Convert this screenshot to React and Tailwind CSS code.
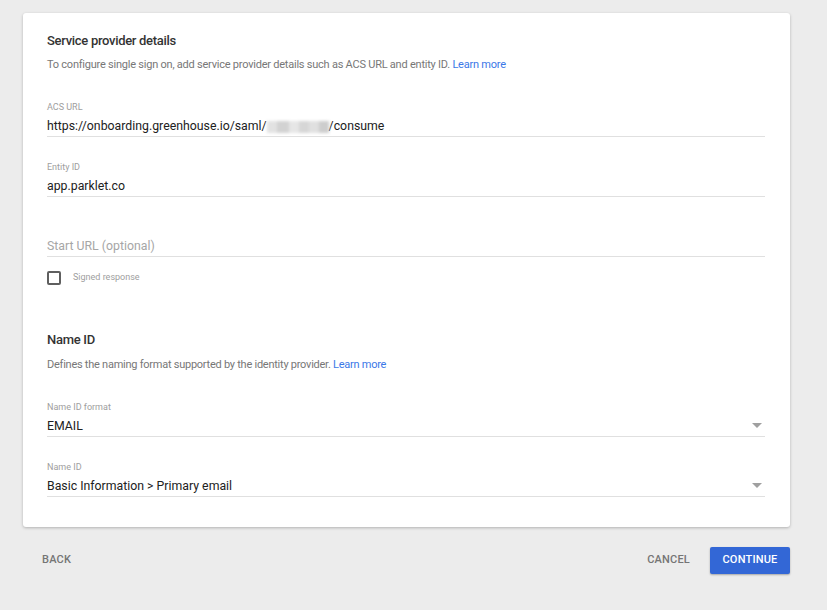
import React from 'react';

const Field = ({ label, value, placeholder, select }) => (
  <div className="flex flex-col">
    <div className="h-[14px] text-[9px] leading-[14px] text-[#9e9e9e]">{label}</div>
    <div className="flex items-center h-[23px] border-b border-[#e0e0e0] pt-[3px]">
      <div className={`flex-1 text-[12.3px] ${placeholder ? 'text-[#a6a6a6]' : 'text-[#212121]'}`}>
        {value || placeholder}
      </div>
      {select && (
        <svg width="10" height="5" viewBox="0 0 10 5" className="mr-[3px] mb-[2px]">
          <path d="M0 0 L10 0 L5 5 Z" fill="#a0a0a0" />
        </svg>
      )}
    </div>
  </div>
);

export default function App() {
  return (
    <div className="min-h-[610px] bg-[#ececec] pt-[13px] pl-[23px] pr-[37px]" style={{ fontFamily: 'Roboto, "Liberation Sans", sans-serif' }}>
      <div className="bg-white rounded-[3px] shadow-[0_1px_3px_rgba(0,0,0,0.25)] pl-[24px] pr-[25px] pt-[20px] pb-[30px]">
        {/* Service provider details */}
        <div className="text-[13px] font-medium text-[#333] leading-[16px] tracking-[-0.3px]">Service provider details</div>
        <div className="mt-[8px] text-[11px] leading-[16px] text-[#777] tracking-[-0.23px]">
          To configure single sign on, add service provider details such as ACS URL and entity ID.{' '}
          <span className="text-[#3b78e7]">Learn more</span>
        </div>

        <div className="mt-[27px]">
          <div className="flex flex-col">
            <div className="h-[14px] text-[9px] leading-[14px] text-[#9e9e9e]">ACS URL</div>
            <div className="flex items-center h-[23px] border-b border-[#e0e0e0] pt-[3px] text-[12.3px] text-[#212121]">
              https://onboarding.greenhouse.io/saml/
              <span className="inline-flex h-[12px] w-[62px] blur-[1.5px]">
                <span className="w-[10px] bg-[#e2e2e2]" />
                <span className="w-[12px] bg-[#d2d2d2]" />
                <span className="w-[10px] bg-[#e6e6e6]" />
                <span className="w-[10px] bg-[#d6d6d6]" />
                <span className="w-[10px] bg-[#e0e0e0]" />
                <span className="w-[10px] bg-[#cdcdcd]" />
              </span>
              /consume
            </div>
          </div>
        </div>

        <div className="mt-[23px]">
          <Field label="Entity ID" value="app.parklet.co" />
        </div>

        <div className="mt-[23px]">
          <Field label="" placeholder="Start URL (optional)" />
        </div>

        <div className="mt-[14px] flex items-center gap-[12px]">
          <div className="w-[14px] h-[14px] border-2 border-[#5f5f5f] rounded-[2px]" />
          <div className="text-[9px] text-[#9e9e9e]">Signed response</div>
        </div>

        {/* Name ID */}
        <div className="mt-[47px] text-[13px] font-medium text-[#333] leading-[16px] tracking-[-0.3px]">Name ID</div>
        <div className="mt-[9px] text-[11px] leading-[16px] text-[#777] tracking-[-0.25px]">
          Defines the naming format supported by the identity provider.{' '}
          <span className="text-[#3b78e7]">Learn more</span>
        </div>

        <div className="mt-[27px]">
          <Field label="Name ID format" value="EMAIL" select />
        </div>
        <div className="mt-[23px]">
          <Field label="Name ID" value="Basic Information > Primary email" select />
        </div>
      </div>

      <div className="flex items-center mt-[20px] ml-[19px]">
        <button className="text-[11px] font-medium text-[#757575] tracking-[0.2px]">BACK</button>
        <div className="flex-1" />
        <button className="mr-[20px] text-[11px] font-medium text-[#757575] tracking-[0.2px]">CANCEL</button>
        <button className="w-[80px] h-[27px] rounded-[2px] bg-[#3367d6] text-white text-[11px] font-medium tracking-[0.2px] shadow-[0_1px_2px_rgba(0,0,0,0.3)]">
          CONTINUE
        </button>
      </div>
    </div>
  );
}
